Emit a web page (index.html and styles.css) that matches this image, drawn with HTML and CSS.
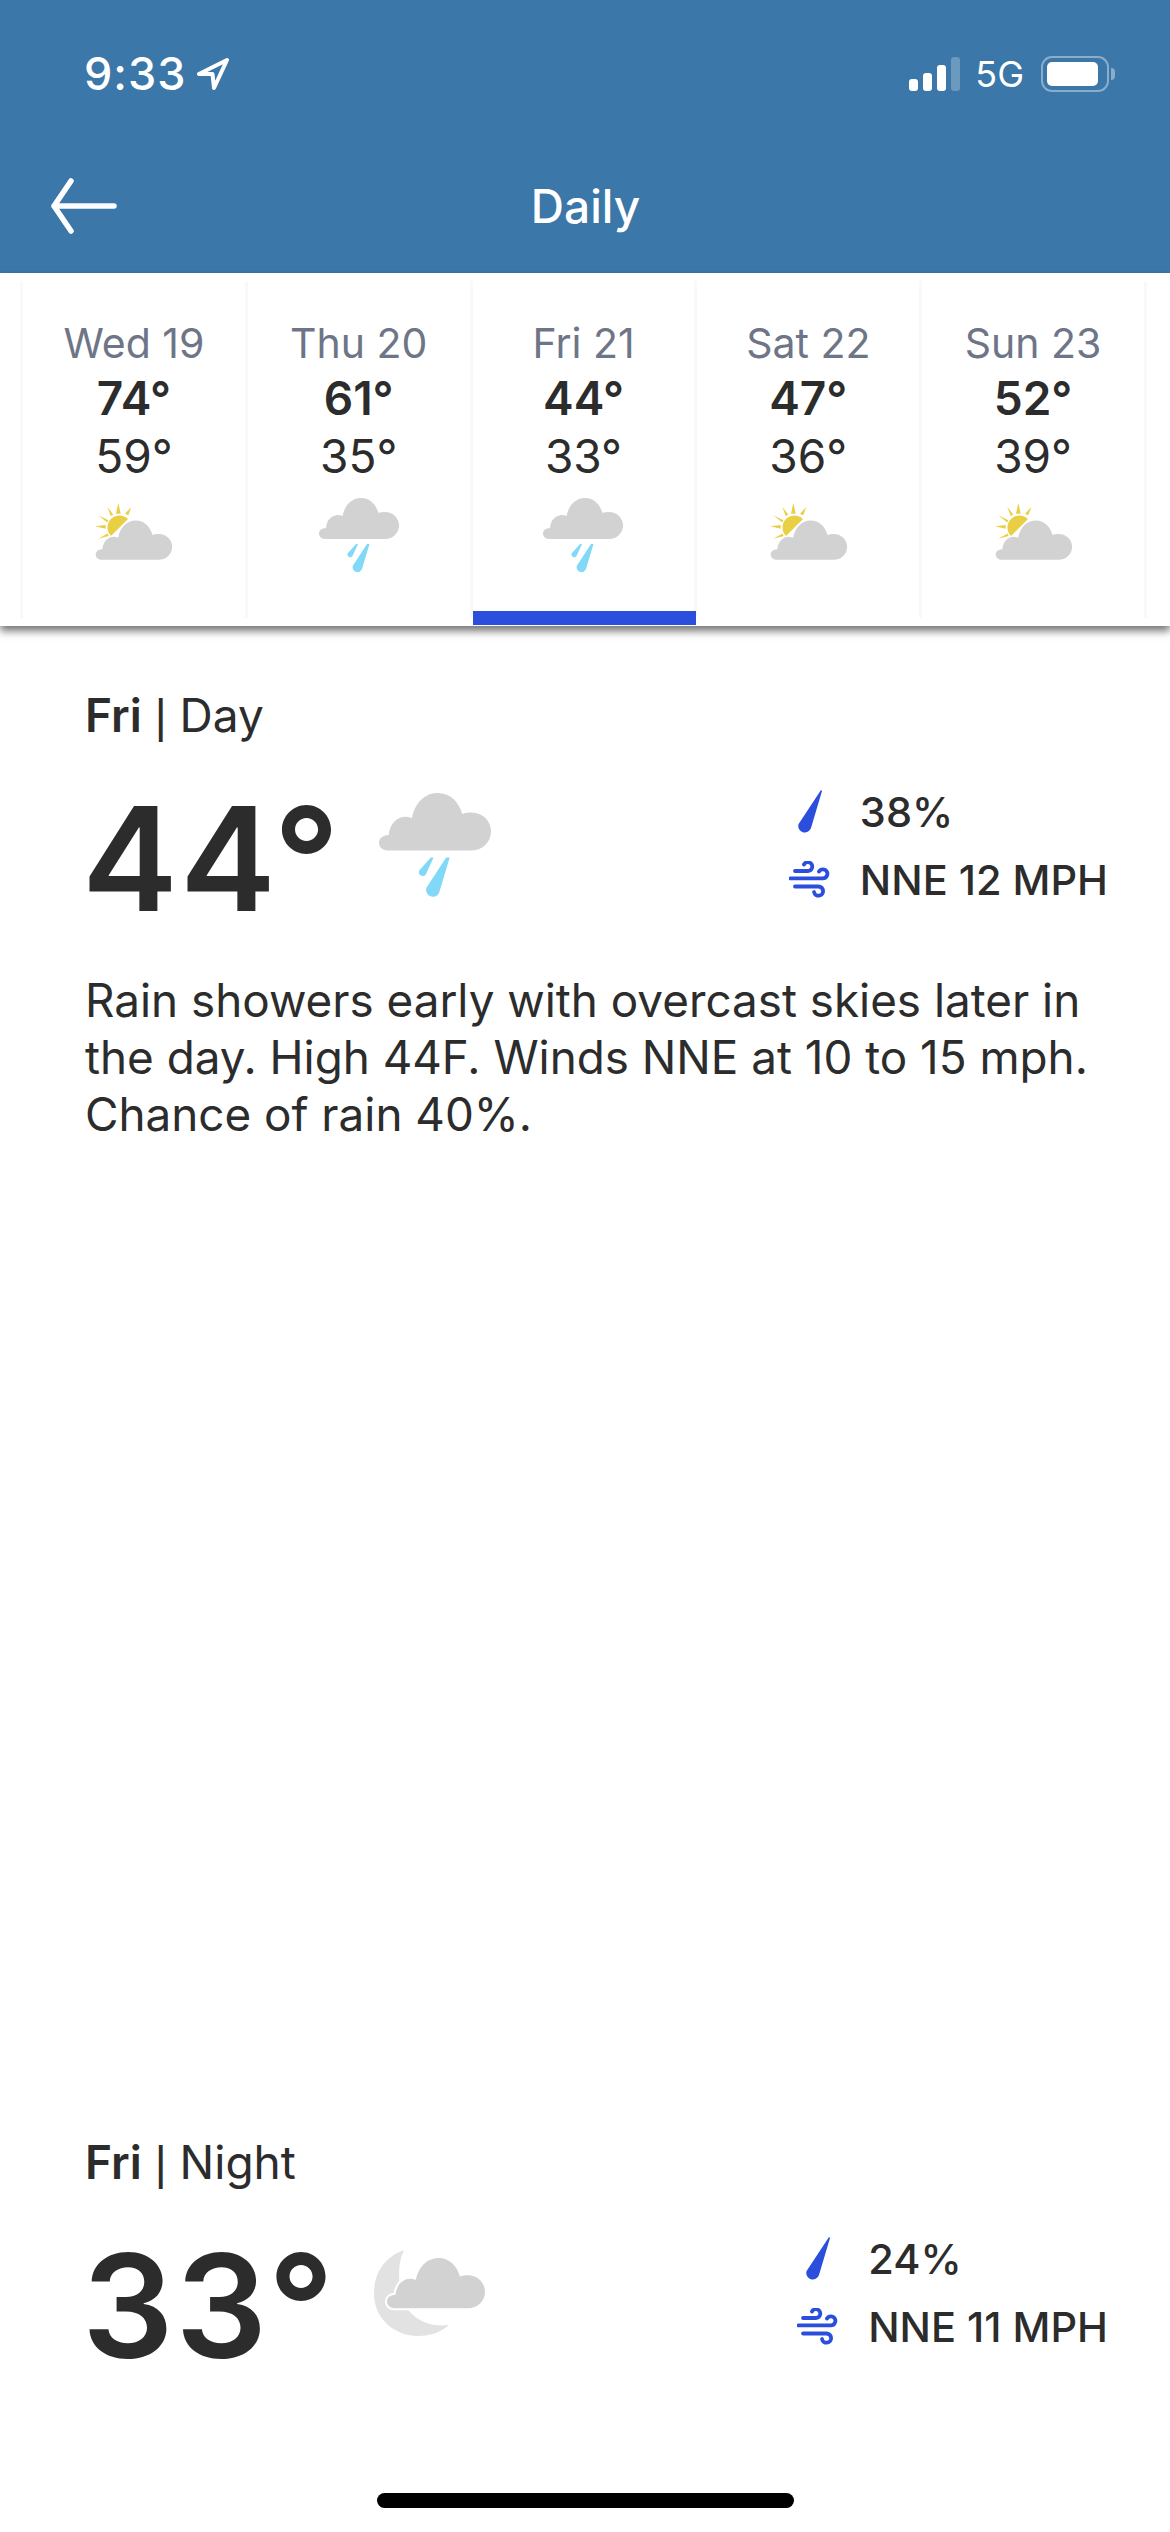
FILE: index.html
```html
<!DOCTYPE html>
<html lang="en">
<head>
  <meta charset="UTF-8">
  <title>Daily</title>
  <link rel="stylesheet" href="styles.css">
</head>
<body>

  <svg class="icon-defs" width="0" height="0">
    <defs>
      <path id="cloud" d="M6 41C2.5 41 0 38.5 0 35.5C0 32.5 2.5 30.2 7 30C7.5 22 13 17 19 17C20.5 17 22 17.3 23.5 18C25.5 7.5 32.5 0 42 0C50.5 0 57 6 59.5 15C61.5 14.3 63.5 14 66 14C74 14 80 20 80 27.5C80 35 74 41 66 41Z"/>
      <symbol id="rain" viewBox="0 0 80 75">
        <use href="#cloud" fill="#d2d2d2"/>
        <path fill="#82d8f7" d="M50.5 46L43 71A4.8 4.8 0 0 1 34 67.5L48 46Z"/>
        <path fill="#82d8f7" d="M39 46L33.5 58A2.7 2.7 0 0 1 29 55L37 46Z"/>
      </symbol>
      <symbol id="partly" viewBox="0 0 77 57">
        <g fill="#e8cf44">
          <path d="M33 16A12 12 0 0 0 16 33Z"/>
          <path d="M23.3 0L25.7 10.7H21Z"/>
          <path d="M36.3 4L33.3 12.3L30 10.8Z"/>
          <path d="M12.3 4L18.3 11.5L15.7 13Z"/>
          <path d="M3.3 12.3L13.3 17.2L12.3 19.4Z"/>
          <path d="M0 23.3L10.7 22V25.7Z"/>
          <path d="M3.3 35.7L12.6 30.4L13.6 33Z"/>
        </g>
        <g transform="translate(0.7 17.6) scale(0.955)">
          <use href="#cloud" fill="#d2d2d2" stroke="#fff" stroke-width="3" paint-order="stroke"/>
        </g>
      </symbol>
      <symbol id="moon" viewBox="0 0 112 86">
        <path fill="#e2e2e2" d="M30 0C8 8 0 26 0 44C0 68 20 86 44 86C57 86 67 82 75 75C52 78 32 66 27 44C24 28 24 12 30 0Z"/>
        <g transform="translate(13 8) scale(1.225)">
          <use href="#cloud" fill="#d2d2d2" stroke="#fff" stroke-width="3.5" paint-order="stroke"/>
        </g>
      </symbol>
      <symbol id="drop" viewBox="0 0 24 44">
        <path fill="#2b4fdc" d="M23 0L24 1L13 38A6 6 0 0 1 0.6 34Z"/>
      </symbol>
      <symbol id="wind" viewBox="0 0 42 38">
        <g fill="none" stroke="#2b4fdc" stroke-width="3.8" stroke-linecap="round">
          <path d="M6 10H19A4.4 4.4 0 1 0 15 3.5"/>
          <path d="M1.5 17.3H34A4.5 4.5 0 1 0 30 10.5"/>
          <path d="M6 25.5H29.5A4.6 4.6 0 1 1 25 31"/>
        </g>
      </symbol>
    </defs>
  </svg>

  <div class="phone">
    <header class="top">
      <div class="status-bar">
        <div class="status-left">
          <span class="clock">9:33</span>
          <svg class="loc-arrow" viewBox="0 0 32 32">
            <path fill="none" stroke="#fff" stroke-width="4" stroke-linejoin="round" d="M30 2L2 16H15.5L17 30Z"/>
          </svg>
        </div>
        <div class="status-right">
          <div class="signal">
            <span class="bar bar-1"></span>
            <span class="bar bar-2"></span>
            <span class="bar bar-3"></span>
            <span class="bar bar-4"></span>
          </div>
          <span class="network">5G</span>
          <div class="battery">
            <div class="battery-body"><span class="battery-level"></span></div>
            <span class="battery-nub"></span>
          </div>
        </div>
      </div>
      <div class="nav-bar">
        <svg class="back-arrow" viewBox="0 0 66 56">
          <path fill="none" stroke="#fff" stroke-width="5.5" stroke-linecap="round" stroke-linejoin="round" d="M63 28H3M20 3L3 28L20 53"/>
        </svg>
        <h1 class="nav-title">Daily</h1>
      </div>
    </header>

    <div class="day-strip">
      <div class="day-cell">
        <div class="day-name">Wed 19</div>
        <div class="day-high">74°</div>
        <div class="day-low">59°</div>
        <svg class="strip-icon partly"><use href="#partly"/></svg>
      </div>
      <div class="day-cell">
        <div class="day-name">Thu 20</div>
        <div class="day-high">61°</div>
        <div class="day-low">35°</div>
        <svg class="strip-icon rain"><use href="#rain"/></svg>
      </div>
      <div class="day-cell selected">
        <div class="day-name">Fri 21</div>
        <div class="day-high">44°</div>
        <div class="day-low">33°</div>
        <svg class="strip-icon rain"><use href="#rain"/></svg>
      </div>
      <div class="day-cell">
        <div class="day-name">Sat 22</div>
        <div class="day-high">47°</div>
        <div class="day-low">36°</div>
        <svg class="strip-icon partly"><use href="#partly"/></svg>
      </div>
      <div class="day-cell">
        <div class="day-name">Sun 23</div>
        <div class="day-high">52°</div>
        <div class="day-low">39°</div>
        <svg class="strip-icon partly"><use href="#partly"/></svg>
      </div>
    </div>

    <section class="period period-day">
      <h2 class="period-title"><b>Fri</b> <span class="pipe">|</span> Day</h2>
      <div class="period-main">
        <div class="period-temp">44°</div>
        <svg class="period-icon rain-big"><use href="#rain"/></svg>
        <div class="stats">
          <svg class="drop-icon"><use href="#drop"/></svg>
          <span>38%</span>
          <svg class="wind-icon"><use href="#wind"/></svg>
          <span>NNE 12 MPH</span>
        </div>
      </div>
      <p class="period-text">Rain showers early with overcast skies later in the day. High 44F. Winds NNE at 10 to 15 mph. Chance of rain 40%.</p>
    </section>

    <section class="period period-night">
      <h2 class="period-title"><b>Fri</b> <span class="pipe">|</span> Night</h2>
      <div class="period-main">
        <div class="period-temp">33°</div>
        <svg class="period-icon moon-big"><use href="#moon"/></svg>
        <div class="stats">
          <svg class="drop-icon"><use href="#drop"/></svg>
          <span>24%</span>
          <svg class="wind-icon"><use href="#wind"/></svg>
          <span>NNE 11 MPH</span>
        </div>
      </div>
    </section>

    <div class="home-indicator"></div>
  </div>

</body>
</html>
```

FILE: styles.css
```css
* {
  box-sizing: border-box;
}

body {
  margin: 0;
  background: #fff;
  color: #2c2c2c;
  font-family: Inter, 'Liberation Sans', sans-serif;
}

.icon-defs {
  position: absolute;
}

.phone {
  position: relative;
  width: 1170px;
  height: 2532px;
  overflow: hidden;
  background: #fff;
}

/* top blue area */
.top {
  height: 273px;
  background: #3b77a8;
  color: #fff;
}

.status-bar {
  display: flex;
  justify-content: space-between;
  align-items: center;
  height: 92px;
  padding: 56px 55px 0 84px;
}

.status-left {
  display: flex;
  align-items: center;
  gap: 11px;
}

.clock {
  font-size: 45px;
  font-weight: 500;
  letter-spacing: 1px;
  line-height: 36px;
}

.loc-arrow {
  width: 32px;
  height: 32px;
}

.status-right {
  display: flex;
  align-items: center;
}

.signal {
  display: flex;
  align-items: flex-end;
  gap: 5px;
  height: 34px;
}

.bar {
  width: 9px;
  background: #fff;
  border-radius: 3px;
}

.bar-1 { height: 12px; }
.bar-2 { height: 18px; }
.bar-3 { height: 26px; }
.bar-4 { height: 34px; background: rgba(255,255,255,0.25); }

.network {
  margin-left: 15px;
  font-size: 36px;
  line-height: 36px;
}

.battery {
  display: flex;
  align-items: center;
  margin-left: 17px;
}

.battery-body {
  width: 68px;
  height: 36px;
  padding: 4px 9px 4px 4px;
  border: 2px solid rgba(255,255,255,0.4);
  border-radius: 11px;
}

.battery-level {
  display: block;
  height: 100%;
  background: #fff;
  border-radius: 5px;
}

.battery-nub {
  width: 4px;
  height: 12px;
  margin-left: 2px;
  background: rgba(255,255,255,0.4);
  border-radius: 0 6px 6px 0;
}

.nav-bar {
  position: relative;
  display: flex;
  align-items: center;
  height: 92px;
  margin-top: 68px;
  padding-left: 51px;
}

.back-arrow {
  width: 66px;
  height: 56px;
}

.nav-title {
  position: absolute;
  left: 1px;
  right: 0;
  margin: 0;
  text-align: center;
  font-size: 46px;
  font-weight: 500;
}

/* day strip */
.day-strip {
  position: relative;
  display: flex;
  height: 353px;
  padding: 0 23px 0 20px;
  background: #fff;
  box-shadow: 0 5px 8px rgba(0,0,0,0.55);
}

.day-cell {
  position: relative;
  flex: 1;
  display: flex;
  flex-direction: column;
  align-items: center;
  margin: 8px 0 8px;
  padding-top: 36px;
  border-left: 3px solid #f9f9f9;
}

.day-cell:last-child {
  border-right: 3px solid #f9f9f9;
}

.day-cell.selected {
  z-index: 1;
}

.day-name {
  font-size: 41px;
  line-height: 52px;
  color: #6e7587;
}

.day-high {
  font-size: 46px;
  font-weight: 600;
  line-height: 58px;
}

.day-low {
  font-size: 46px;
  line-height: 58px;
}

.strip-icon {
  flex-shrink: 0;
}

.strip-icon.partly {
  width: 77px;
  height: 57px;
  margin-top: 18px;
}

.strip-icon.rain {
  width: 80px;
  height: 75px;
  margin-top: 13px;
}

.day-cell.selected::after {
  content: "";
  position: absolute;
  left: 0;
  right: -2px;
  bottom: -7px;
  height: 14px;
  background: #2b4fdc;
}

/* day and night sections */
.period {
  padding: 0 62px 0 85px;
}

.period-day {
  padding-top: 59px;
}

.period-night {
  padding-top: 989px;
}

.period-title {
  margin: 0;
  font-size: 46px;
  font-weight: 400;
  line-height: 60px;
}

.period-title b {
  font-weight: 600;
}

.pipe {
  font-family: 'Liberation Sans', sans-serif;
}

.period-main {
  display: flex;
  align-items: center;
  margin-top: 28px;
}

.period-temp {
  margin-left: -3px;
  font-size: 144px;
  font-weight: 600;
  letter-spacing: 2px;
  line-height: 170px;
}

.period-icon {
  margin-left: 38px;
}

.rain-big {
  width: 112px;
  height: 105px;
  margin-bottom: 28px;
}

.moon-big {
  width: 112px;
  height: 86px;
  margin-bottom: 26px;
}

.stats {
  display: grid;
  grid-template-columns: 42px auto;
  column-gap: 29px;
  row-gap: 18px;
  align-items: center;
  justify-items: center;
  margin-left: auto;
  margin-bottom: 27px;
  font-size: 41.5px;
  font-weight: 500;
  line-height: 50px;
}

.stats span {
  justify-self: start;
}

.drop-icon {
  width: 24px;
  height: 44px;
}

.wind-icon {
  width: 42px;
  height: 38px;
}

.period-text {
  margin: 28px 0 0;
  font-size: 45.8px;
  line-height: 57px;
}

.home-indicator {
  position: absolute;
  left: 377px;
  bottom: 24px;
  width: 417px;
  height: 15px;
  background: #000;
  border-radius: 8px;
}
```
